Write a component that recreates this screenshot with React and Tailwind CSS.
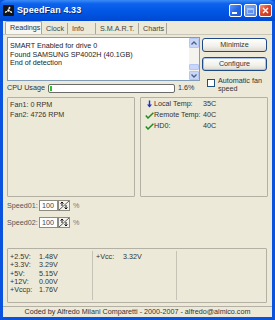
import React from "react";

const tabs = [
  { label: "Readings", w: "w-[37px]", active: true },
  { label: "Clock", w: "w-[26px]" },
  { label: "Info", w: "w-[28px]" },
  { label: "S.M.A.R.T.", w: "w-[43px]" },
  { label: "Charts", w: "w-[28px]" },
];

const temps = [
  { name: "Local Temp:", value: "35C", icon: "down" },
  { name: "Remote Temp:", value: "40C", icon: "ok" },
  { name: "HD0:", value: "40C", icon: "ok" },
];

const volts = [
  ["+2.5V:", "1.48V"],
  ["+3.3V:", "3.29V"],
  ["+5V:", "5.15V"],
  ["+12V:", "0.00V"],
  ["+Vccp:", "1.76V"],
];

const FanIcon = () => (
  <svg width="11" height="11" viewBox="0 0 11 11">
    <rect x="0" y="0" width="11" height="11" rx="1" fill="#151515" />
    <circle cx="5.5" cy="5.5" r="1.2" fill="#fff" />
    <path d="M5.5 4.3 C5 2.5 6 1.5 7.2 2 C7.8 3 7 4 5.5 4.3Z" fill="#e8e8e8" />
    <path d="M6.6 6.1 C8.3 5.6 9.4 6.5 9 7.7 C8 8.4 7 7.6 6.6 6.1Z" fill="#e8e8e8" />
    <path d="M4.4 6.1 C3.8 7.8 2.6 8.4 1.9 7.4 C1.9 6.3 3 5.7 4.4 6.1Z" fill="#e8e8e8" />
  </svg>
);

const TitleButton = ({ kind }) => {
  const base =
    "w-[13px] h-[13px] rounded-[2px] border border-white flex items-center justify-center";
  if (kind === "close")
    return (
      <div className={`${base} bg-[linear-gradient(135deg,#F29A7C,#E0472A_45%,#C6341C)]`}>
        <svg width="7" height="7" viewBox="0 0 7 7">
          <path d="M1 1L6 6M6 1L1 6" stroke="#fff" strokeWidth="1.4" />
        </svg>
      </div>
    );
  if (kind === "max")
    return (
      <div className={`${base} border-[#9DBCF5] bg-[linear-gradient(135deg,#7FA9F3,#4F84EB)]`}>
        <div className="w-[7px] h-[6px] border border-[#A9C4F7] border-t-2" />
      </div>
    );
  return (
    <div className={`${base} items-end justify-start pl-[2px] pb-[2px] bg-[linear-gradient(135deg,#5E98F8,#2567E8_50%,#1A55D6)]`}>
      <div className="w-[5px] h-[2px] bg-white" />
    </div>
  );
};

const Chevron = ({ up }) => (
  <svg width="6" height="4" viewBox="0 0 6 4">
    <path d={up ? "M0.5 3.5L3 1L5.5 3.5" : "M0.5 0.5L3 3L5.5 0.5"} stroke="#4D6185" strokeWidth="1.3" fill="none" />
  </svg>
);

const Spinner = () => (
  <svg width="12" height="11" viewBox="0 0 12 11" className="block">
    <rect x="0.5" y="0.5" width="11" height="10" fill="#F4F3EE" stroke="#8E8C80" />
    <path d="M1 10L11 1" stroke="#333" strokeWidth="0.8" />
    <path d="M4 6V2M2.5 3.5L4 2L5.5 3.5" stroke="#111" strokeWidth="1" fill="none" />
    <path d="M8 5V9M6.5 7.5L8 9L9.5 7.5" stroke="#111" strokeWidth="1" fill="none" />
  </svg>
);

const SpeedRow = ({ label, className }) => (
  <div className={`flex items-center h-[11px] ${className}`}>
    <span className="w-[32px] text-[#555]">{label}</span>
    <div className="w-[19px] h-[11px] bg-white border border-[#8E8C80] flex items-center pl-[2px] text-[#444]">
      100
    </div>
    <Spinner />
    <span className="ml-[3px] text-[#777]">%</span>
  </div>
);

const XpButton = ({ children, focused, className }) => (
  <div
    className={`h-[14px] rounded-[3px] border border-[#1F4A86] bg-[linear-gradient(180deg,#FFFFFF,#F1F0EA_60%,#DCDAD0)] flex items-center justify-center text-[#333] ${
      focused ? "shadow-[inset_0_0_0_1px_#A9C2EE]" : ""
    } ${className}`}
  >
    {children}
  </div>
);

const TempIcon = ({ kind }) =>
  kind === "down" ? (
    <svg width="7" height="8" viewBox="0 0 7 8">
      <path d="M3.5 0.5V6.5" stroke="#1F2FCC" strokeWidth="1.4" />
      <path d="M1 4.5L3.5 7.5L6 4.5Z" fill="#1F2FCC" />
    </svg>
  ) : (
    <svg width="9" height="7" viewBox="0 0 9 7">
      <path d="M0.8 3.6L3 6L8.4 0.8" stroke="#1F8C1F" strokeWidth="1.5" fill="none" />
    </svg>
  );

export default function App() {
  return (
    <div className="w-[275px] h-[320px] flex flex-col bg-[#0A53DE] font-['Liberation_Sans',Arial,sans-serif] text-[7.2px] leading-none text-[#222] overflow-hidden">
      {/* title bar */}
      <div className="h-[21px] flex items-center pl-[3px] pr-[3px] bg-[linear-gradient(180deg,#3A8CF7_0%,#0E62EC_18%,#0057E4_55%,#0049D2_100%)] rounded-t-[6px]">
        <FanIcon />
        <span className="ml-[3px] text-white font-bold text-[9px] tracking-[0.1px] [text-shadow:1px_1px_0_#0A2A7A]">
          SpeedFan 4.33
        </span>
        <div className="ml-auto flex gap-[2px]">
          <TitleButton kind="min" />
          <TitleButton kind="max" />
          <TitleButton kind="close" />
        </div>
      </div>

      <div className="flex-1 flex flex-col mx-[3px] mb-[3px] bg-[#ECE9D8]">
        {/* tabs */}
        <div className="h-[14px] flex items-end pl-[2px] border-b border-[#C9C6B8]">
          {tabs.map((t) => (
            <div
              key={t.label}
              className={`${t.w} flex items-center pl-[4px] border-r border-[#A9A79B] ${
                t.active
                  ? "h-[13px] bg-[#F7F6F1] border-l border-t border-[#A9A79B] rounded-t-[2px] text-[#333]"
                  : "h-[11px] text-[#444]"
              }`}
            >
              {t.label}
            </div>
          ))}
        </div>

        <div className="flex flex-col px-[4px] pt-[2px]">
          {/* top area */}
          <div className="flex gap-[2px]">
            <div className="w-[193px] flex flex-col">
              <div className="h-[44px] flex bg-white border border-[#7F9DB9]">
                <div className="flex-1 pl-[2px] pt-[4px] flex flex-col gap-[1.5px] text-[#222]">
                  <span className="leading-[7.2px]">SMART Enabled for drive 0</span>
                  <span className="leading-[7.2px]">Found SAMSUNG SP4002H (40.1GB)</span>
                  <span className="leading-[7.2px]">End of detection</span>
                </div>
                <div className="w-[10px] flex flex-col bg-[#F4F3EE]">
                  <div className="h-[10px] bg-[#C8D6FA] border border-[#B5C6F2] rounded-[1px] flex items-center justify-center">
                    <Chevron up />
                  </div>
                  <div className="flex-1" />
                  <div className="h-[6px] bg-[#C8D6FA] border border-[#B5C6F2] rounded-[1px]" />
                  <div className="h-[1px]" />
                  <div className="h-[9px] bg-[#C8D6FA] border border-[#B5C6F2] rounded-[1px] flex items-center justify-center">
                    <Chevron />
                  </div>
                </div>
              </div>
              <div className="mt-[2px] h-[10px] flex items-center">
                <span className="w-[41px] text-[#333]">CPU Usage</span>
                <div className="w-[127px] h-[9px] rounded-[2px] border border-[#6B6B6B] bg-white flex items-center px-[1px]">
                  <div className="w-[2px] h-[5px] bg-[#2FC02F]" />
                </div>
                <span className="ml-[3px] text-[#333]">1.6%</span>
              </div>
            </div>

            <div className="w-[65px] flex flex-col">
              <XpButton className="mt-[1px]">Minimize</XpButton>
              <XpButton focused className="mt-[5px]">
                Configure
              </XpButton>
              <div className="mt-[6px] flex items-start">
                <div className="ml-[5px] mt-[2px] w-[8px] h-[8px] bg-white border border-[#1C5180]" />
                <div className="ml-[3px] flex flex-col gap-[1px] text-[#333]">
                  <span>Automatic fan</span>
                  <span>speed</span>
                </div>
              </div>
            </div>
          </div>

          {/* fans / temps */}
          <div className="mt-[4px] flex gap-[5px]">
            <div className="w-[128px] h-[100px] border border-[#B4B1A4] rounded-[1px] pl-[2px] pt-[3px] flex flex-col gap-[3px] text-[#333]">
              <span>Fan1: 0 RPM</span>
              <span>Fan2: 4726 RPM</span>
            </div>
            <div className="w-[128px] h-[100px] border border-[#B4B1A4] rounded-[1px] pl-[4px] pt-[2px] flex flex-col gap-[3px] text-[#333]">
              {temps.map((t) => (
                <div key={t.name} className="flex items-center h-[8px]">
                  <span className="w-[9px] flex justify-center">
                    <TempIcon kind={t.icon} />
                  </span>
                  <span className="w-[49px]">{t.name}</span>
                  <span>{t.value}</span>
                </div>
              ))}
            </div>
          </div>

          {/* speeds */}
          <SpeedRow label="Speed01:" className="mt-[3px]" />
          <SpeedRow label="Speed02:" className="mt-[6px]" />

          {/* voltages */}
          <div className="mt-[20px] w-[260px] h-[55px] border border-[#B4B1A4] rounded-[1px] flex text-[#333]">
            <div className="w-[84px] pl-[2px] pt-[4px] flex flex-col gap-[1.3px]">
              {volts.map(([k, v]) => (
                <div key={k} className="flex h-[7px] items-center">
                  <span className="w-[29px]">{k}</span>
                  <span>{v}</span>
                </div>
              ))}
            </div>
            <div className="w-[84px] my-[2px] border-l border-[#C6C3B6] pl-[3px] pt-[2px]">
              <div className="flex h-[7px] items-center">
                <span className="w-[27px]">+Vcc:</span>
                <span>3.32V</span>
              </div>
            </div>
            <div className="flex-1 my-[2px] border-l border-[#C6C3B6]" />
          </div>
        </div>

        <div className="flex-1" />
        {/* status bar */}
        <div className="h-[11px] border-t border-[#B4B1A4] flex items-center justify-center text-[#333]">
          Coded by Alfredo Milani Comparetti - 2000-2007 - alfredo@almico.com
        </div>
      </div>
    </div>
  );
}
